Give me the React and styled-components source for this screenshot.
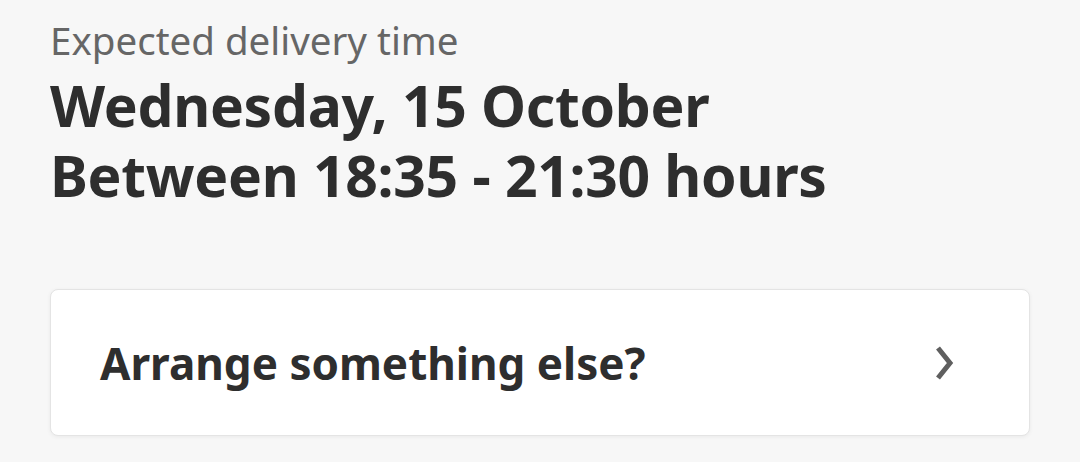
import React from 'react';
import styled, { createGlobalStyle } from 'styled-components';

const GlobalStyle = createGlobalStyle`
  html, body {
    margin: 0;
    padding: 0;
    background: #f7f7f7;
  }
  body {
    font-family: 'Noto Sans', 'Open Sans', sans-serif;
    color: #2e2e2e;
  }
`;

const Page = styled.div`
  width: 1080px;
  height: 462px;
  box-sizing: border-box;
  padding: 16px 50px 0;
  display: flex;
  flex-direction: column;
`;

const Label = styled.div`
  font-size: 38.5px;
  line-height: 48px;
  color: #666666;
`;

const Slot = styled.div`
  margin-top: 6px;
  display: flex;
  flex-direction: column;
  font-size: 57px;
  font-weight: 700;
  letter-spacing: -0.3px;
`;

const SlotLine = styled.div`
  height: 70px;
  line-height: 70px;
  white-space: nowrap;
`;

const Card = styled.button`
  all: unset;
  box-sizing: border-box;
  margin-top: 79px;
  height: 147px;
  display: flex;
  align-items: center;
  justify-content: space-between;
  padding: 0 74px 0 49px;
  background: #ffffff;
  border: 1px solid #e4e4e4;
  border-radius: 8px;
  box-shadow: 0 1px 4px rgba(0, 0, 0, 0.06);
  cursor: pointer;
`;

const CardTitle = styled.span`
  font-size: 44px;
  font-weight: 700;
`;

const Chevron = () => (
  <svg width="20" height="36" viewBox="0 0 20 36" fill="none">
    <path d="M3 3 L15 18 L3 33" stroke="#5f5f5f" strokeWidth="5" strokeLinecap="butt" strokeLinejoin="miter" />
  </svg>
);

export default function App() {
  return (
    <>
      <GlobalStyle />
      <Page>
        <Label>Expected delivery time</Label>
        <Slot>
          <SlotLine>Wednesday, 15 October</SlotLine>
          <SlotLine>Between 18:35 - 21:30 hours</SlotLine>
        </Slot>
        <Card>
          <CardTitle>Arrange something else?</CardTitle>
          <Chevron />
        </Card>
      </Page>
    </>
  );
}
